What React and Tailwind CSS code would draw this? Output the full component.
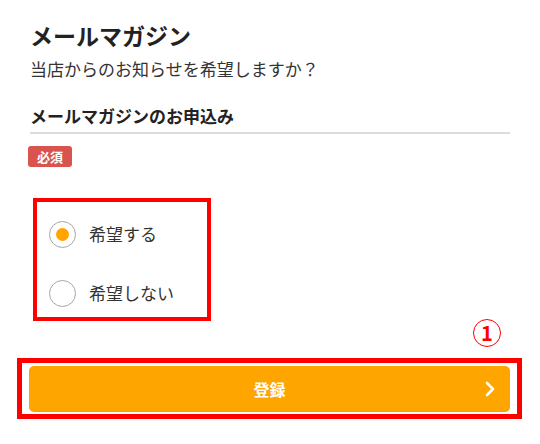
import React, { useState } from "react";

const Radio = ({ checked, label, onSelect }) => (
  <button
    type="button"
    onClick={onSelect}
    className="flex items-center gap-[13px] h-[30px] text-left"
  >
    <span className="w-[27px] h-[27px] rounded-full border-[1.5px] border-[#a6a6a6] flex items-center justify-center bg-white">
      {checked && <span className="w-[13px] h-[13px] rounded-full bg-[#ffa500]" />}
    </span>
    <span className="text-[17px] leading-[26px] text-[#333]">{label}</span>
  </button>
);

const App = () => {
  const [choice, setChoice] = useState("yes");

  return (
    <div
      className="w-[540px] h-[444px] bg-white overflow-hidden text-[#333]"
      style={{ fontFamily: '"Noto Sans CJK JP", "Noto Sans", sans-serif' }}
    >
      <div className="pt-[18px] px-[30px]">
        <h2 className="text-[23px] font-bold leading-[34px] text-[#222]">メールマガジン</h2>
        <p className="mt-[4px] text-[17px] leading-[26px]">当店からのお知らせを希望しますか？</p>
        <div className="mt-[21px] pb-[3px] border-b-2 border-[#dcdcdc] text-[17px] font-bold leading-[26px] text-[#222]">
          メールマガジンのお申込み
        </div>
        <span className="inline-block mt-[12px] -ml-[2px] h-[21px] px-[9px] rounded-[3px] bg-[#d9534f] text-white text-[13px] font-bold leading-[21px]">
          必須
        </span>
      </div>

      {/* Radios */}
      <div className="ml-[33px] mt-[31px] w-[178px] h-[123px] border-4 border-[#ff0000] pl-[12px] pt-[17px] flex flex-col gap-[29px]">
        <Radio checked={choice === "yes"} label="希望する" onSelect={() => setChoice("yes")} />
        <Radio checked={choice === "no"} label="希望しない" onSelect={() => setChoice("no")} />
      </div>

      <div className="flex justify-end pr-[39px] -mt-[2px]">
        <span className="w-[28px] h-[28px] rounded-full border-[1.5px] border-[#ff0000] text-[#ff0000] flex items-center justify-center text-[20px] font-bold leading-none">
          1
        </span>
      </div>

      {/* Submit */}
      <div className="ml-[17px] mt-[11px] w-[505px] h-[61px] border-[5px] border-[#ff0000] px-[7px] py-[3px]">
        <button
          type="button"
          className="relative w-full h-[45px] rounded-[5px] bg-[#ffa500] shadow-[0_1px_0_#e0a030] flex items-center justify-center"
        >
          <span className="text-white text-[16px] font-bold">登録</span>
          <svg
            className="absolute right-[15px] top-1/2 -translate-y-1/2"
            width="10"
            height="16"
            viewBox="0 0 10 16"
            fill="none"
            stroke="white"
            strokeWidth="2.6"
            strokeLinecap="round"
            strokeLinejoin="round"
          >
            <polyline points="2,2 8,8 2,14" />
          </svg>
        </button>
      </div>
    </div>
  );
};

export default App;
